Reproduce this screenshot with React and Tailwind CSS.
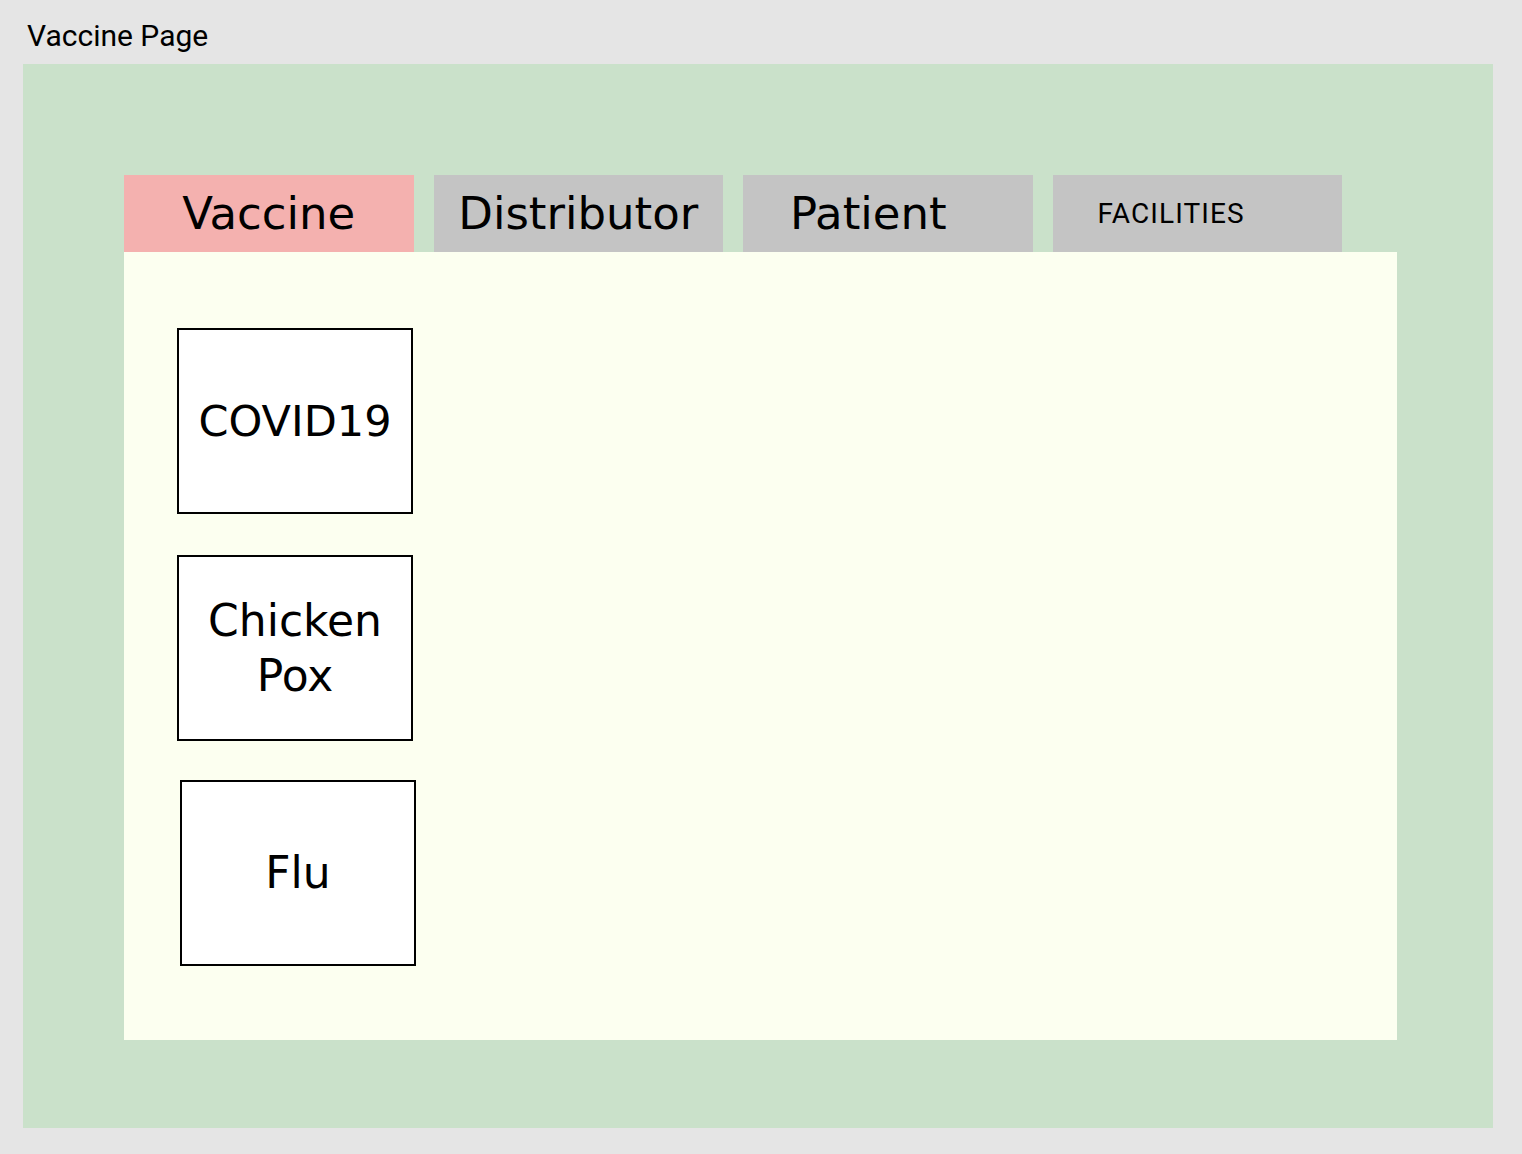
export default function App() {
  const tabs = [
    { label: "Vaccine", active: true, cls: "justify-center text-[45px]" },
    { label: "Distributor", cls: "justify-center text-[45px]" },
    { label: "Patient", cls: "pl-[47px] text-[45px]" },
    { label: "FACILITIES", cls: "pl-[45px] text-[28px] tracking-[1.1px] font-['Roboto',sans-serif]", roboto: true },
  ];

  return (
    <div className="min-h-[1154px] w-full bg-[#e5e5e5] font-['Roboto',sans-serif] text-black">
      <div className="h-[64px] pl-[27px] pt-[16px] text-[30px] leading-[40px]">Vaccine Page</div>
      <div className="ml-[23px] mr-[29px] h-[1064px] bg-[#cae1ca] pl-[101px] pt-[111px]">
        <div className="flex gap-[20px] h-[77px]">
          {tabs.map((t) => (
            <div
              key={t.label}
              className={
                "w-[289.5px] h-[77px] flex items-center " +
                (t.active ? "bg-[#f4b1af] " : "bg-[#c4c4c4] ") +
                (t.roboto ? "" : "font-['DejaVu_Sans',sans-serif] ") +
                t.cls
              }
            >
              {t.label}
            </div>
          ))}
        </div>
        <div className="w-[1273px] h-[788px] bg-[#fcfff0] pl-[53px] pt-[76px] font-['DejaVu_Sans',sans-serif]">
          <div className="w-[236px] h-[186px] border-2 border-black bg-white flex items-center justify-center text-[43px]">
            COVID19
          </div>
          <div className="mt-[41px] w-[236px] h-[186px] border-2 border-black bg-white flex items-center justify-center text-center text-[44px] leading-[55px]">
            Chicken
            <br />
            Pox
          </div>
          <div className="mt-[39px] ml-[3px] w-[236px] h-[186px] border-2 border-black bg-white flex items-center justify-center text-[44px]">
            Flu
          </div>
        </div>
      </div>
    </div>
  );
}
